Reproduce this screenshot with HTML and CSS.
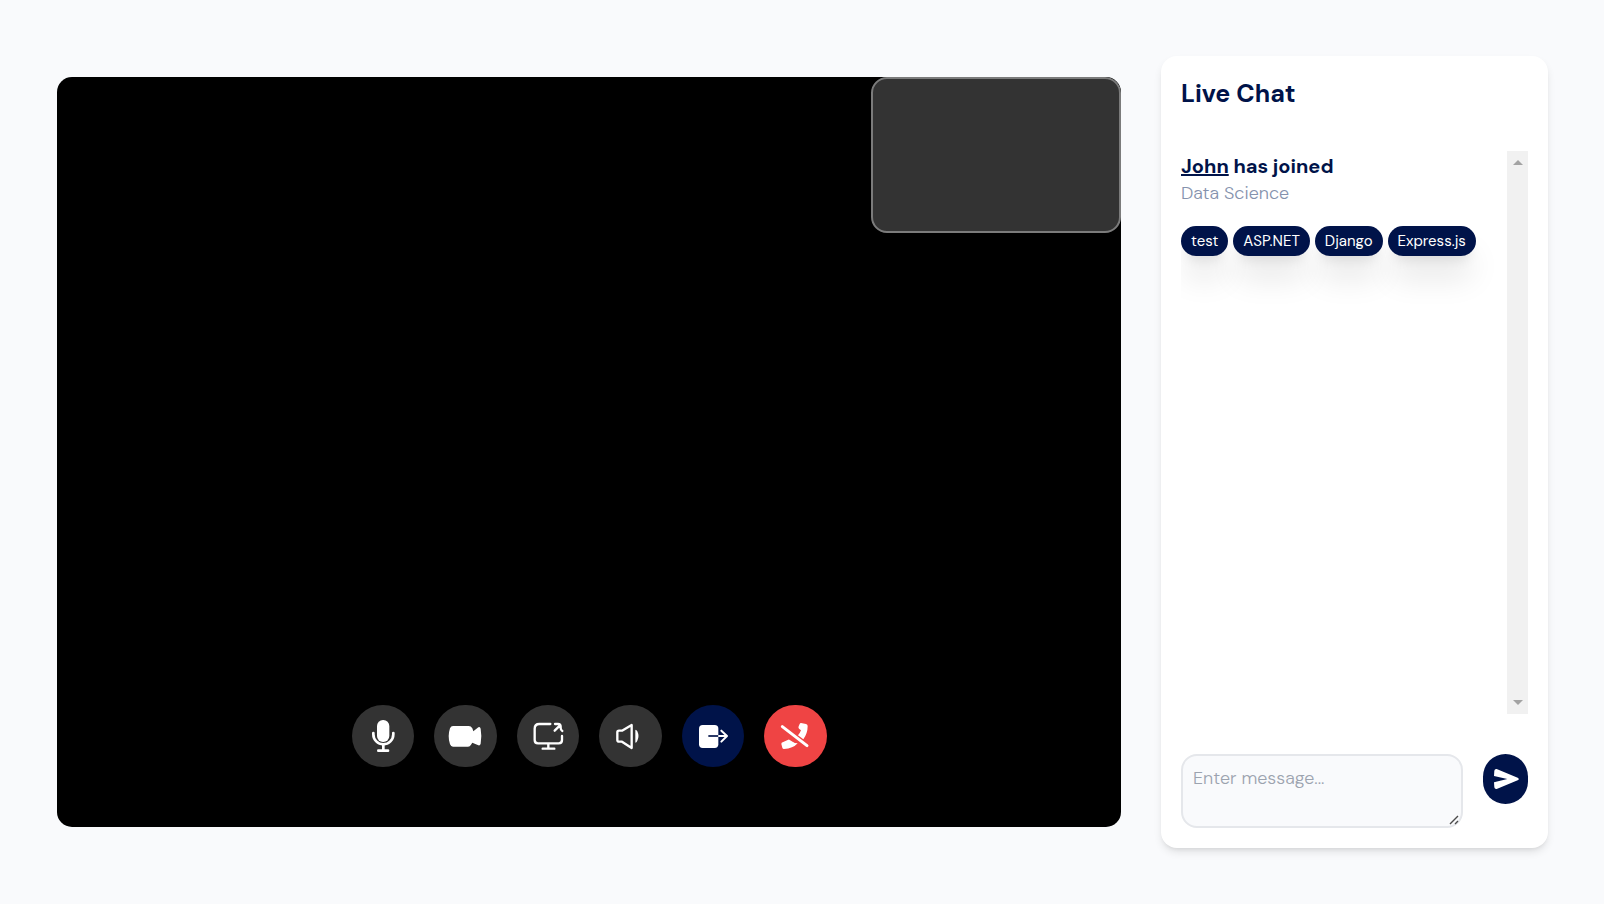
FILE: index.html
```html
<!DOCTYPE html>
<html lang="en">
<head>
  <meta charset="utf-8">
  <meta name="viewport" content="width=device-width, initial-scale=1">
  <title>Live Chat</title>
  <link rel="stylesheet" href="styles.css">
</head>
<body>
  <main class="room">
    <section class="stage" aria-label="Video call">
      <div class="self-view"></div>
      <div class="controls">
        <button class="control" type="button" aria-label="Microphone">
          <svg class="icon" viewBox="-54 -54 108 108"><rect class="solid" x="-18" y="-48" width="37" height="66" rx="18"/><path class="line w8" d="M-29-9v4a30 30 0 0 0 60 0v-4M1 28v14"/><path class="line w8" d="M-14 44h29"/></svg>
        </button>
        <button class="control" type="button" aria-label="Camera">
          <svg class="icon" viewBox="-54 -54 108 108"><path class="solid" d="M-36-30H11Q18-30 22-23L25-14L40-26Q45-29 47-22Q51 0 47 23Q45 30 40 28L22 20L18 26Q15 32 9 32H-36Q-42 32-45 25Q-53 1-45-23Q-42-30-36-30Z"/></svg>
        </button>
        <button class="control" type="button" aria-label="Share screen">
          <svg class="icon" viewBox="-54 -54 108 108"><path class="line w7" d="M7-36H-26Q-40-36-40-22V12Q-40 22-30 22H32Q42 22 42 12V0M1 22V37M-16 38H19M20-16L36-32M21-36H30Q38-36 38-28V-24Q38-18 43-15"/></svg>
        </button>
        <button class="control" type="button" aria-label="Volume">
          <svg class="icon" viewBox="-54 -54 108 108"><path class="line w7" d="M-33-16H-24L5-33V36L-24 17H-33Q-38 17-38 12V-11Q-38-16-33-16Z"/><path class="solid" d="M16-19Q20-19 22-14Q29 1 22 14Q20 20 16 20Z"/></svg>
        </button>
        <button class="control control-next" type="button" aria-label="Next">
          <svg class="icon" viewBox="-54 -54 108 108"><rect class="solid" x="-42" y="-33" width="58" height="69" rx="11"/><path class="line cut" d="M-14 0H16"/><path class="line w6" d="M18 0H41M25-16L42 0L25 17"/></svg>
        </button>
        <button class="control control-end" type="button" aria-label="End call">
          <svg class="icon" viewBox="-54 -54 108 108"><path class="solid" d="M18-39L33-36Q38-35 38-30Q38-8 25 10L9-2Q15-9 18-17L12-22Q9-25 11-29L14-36Q15-39 18-39ZM-17 11L-6 18Q-2 20-1 21L8 22Q-6 38-33 39Q-37 39-38 35L-41 24Q-41 20-37 19L-22 12Q-19 10-17 11Z"/><path class="line slash" d="M-38-28L36 29"/></svg>
        </button>
      </div>
    </section>

    <aside class="chat">
      <h1 class="chat-title">Live Chat</h1>
      <div class="log">
        <div class="messages">
          <h2 class="joined"><a class="user" href="#john">John</a> has joined</h2>
          <p class="field">Data Science</p>
          <ul class="tags">
            <li class="tag">test</li>
            <li class="tag">ASP.NET</li>
            <li class="tag">Django</li>
            <li class="tag">Express.js</li>
          </ul>
        </div>
        <div class="track" aria-hidden="true">
          <svg class="arrow" viewBox="0 0 10 5"><path d="M0 5L5 0L10 5Z"/></svg>
          <svg class="arrow" viewBox="0 0 10 5"><path d="M0 0L5 5L10 0Z"/></svg>
        </div>
      </div>
      <form class="composer">
        <div class="message-box">
          <textarea class="message" aria-label="Message" placeholder="Enter message..."></textarea>
          <svg class="grip" viewBox="0 0 10 10" aria-hidden="true"><path d="M1 9L9 1M6 9L9 6"/></svg>
        </div>
        <button class="send" type="button" aria-label="Send">
          <svg class="icon" viewBox="-54 -54 108 108"><path class="solid" d="M-28-30L35-4Q42 0 35 4L-28 30Q-34 31-35 25L-36 10L4 0L-36-9L-35-25Q-34-31-28-30Z"/></svg>
        </button>
      </form>
    </aside>
  </main>
</body>
</html>
```
FILE: styles.css
```css
* { box-sizing: border-box; }

body {
  margin: 0;
  background: #f9fafc;
  color: #001349;
  font-family: "DM Sans", Inter, sans-serif;
}

.room {
  display: flex;
  align-items: center;
  gap: 40px;
  min-height: 100vh;
  padding: 56px 56px 56px 57px;
}

.stage {
  position: relative;
  display: flex;
  flex: 1;
  align-items: flex-end;
  justify-content: center;
  min-height: 750px;
  padding-bottom: 60px;
  border-radius: 15px;
  background: #000;
  overflow: hidden;
}

.self-view {
  position: absolute;
  top: 0;
  right: 0;
  width: 250px;
  height: 156px;
  border: 2px solid #7b7b7b;
  border-radius: 16px;
  background: #333;
}

.controls {
  display: grid;
  grid-template-columns: repeat(6, 1fr);
  gap: 20px;
  width: 475px;
}

.control {
  display: grid;
  place-items: center;
  aspect-ratio: 1;
  padding: 0;
  border: 0;
  border-radius: 50%;
  background: #333;
}

.control-next { background: #001349; }
.control-end { background: #ef4444; }

.icon { display: block; width: 36px; height: 36px; }
.solid { fill: #fff; }
.line { fill: none; stroke: #fff; stroke-linecap: round; stroke-linejoin: round; }
.w6 { stroke-width: 6; }
.w7 { stroke-width: 7; }
.w8 { stroke-width: 8; }
.cut { stroke: #001349; stroke-width: 5; stroke-linecap: butt; }
.slash { stroke-width: 9; }

.chat {
  display: flex;
  flex: 0 0 387px;
  flex-direction: column;
  align-self: stretch;
  padding: 20px;
  border-radius: 16px;
  background: #fff;
  box-shadow: 0 5px 8px -1px rgb(0 0 0 / 10%), 0 3px 5px -3px rgb(0 0 0 / 10%);
}

.chat-title {
  margin: 0 0 40px;
  font-size: 25px;
  font-weight: 700;
  line-height: 35px;
}

.log {
  display: flex;
  flex: 1;
  margin-bottom: 40px;
}

.messages { flex: 1; overflow: hidden; }

.joined {
  margin: 0;
  font-size: 20px;
  font-weight: 700;
  line-height: 30px;
}

.user { color: inherit; }

.field {
  margin: 0 0 20px;
  color: #8592ad;
  font-size: 18px;
  font-weight: 300;
  line-height: 25px;
}

.tags {
  display: flex;
  flex-wrap: wrap;
  gap: 5px;
  margin: 0;
  padding: 0;
  list-style: none;
}

.tag {
  padding: 0 10px;
  border-radius: 15px;
  background: #001349;
  box-shadow: 0 25px 31px -3px rgb(0 0 0 / 10%), 0 10px 12px -6px rgb(0 0 0 / 10%);
  color: #fff;
  font-size: 15px;
  line-height: 30px;
}

.track {
  display: flex;
  flex-direction: column;
  align-items: center;
  justify-content: space-between;
  width: 21px;
  padding: 9px 0;
  background: #f1f1f1;
}

.arrow { width: 10px; height: 5px; fill: #a3a3a3; }

.composer {
  display: flex;
  align-items: flex-start;
  gap: 20px;
}

.message-box {
  position: relative;
  display: flex;
  flex: 1;
  min-width: 0;
}

.message {
  flex: 1;
  min-width: 0;
  height: 74px;
  padding: 10px;
  border: 2px solid #e5e7eb;
  border-radius: 16px;
  background: #f9fafc;
  color: #001349;
  font: 400 18px/25px "DM Sans", Inter, sans-serif;
}

.message::placeholder { color: #9ca3af; font-weight: 300; }
.message::-webkit-resizer { background: transparent; }

.grip {
  position: absolute;
  right: 4px;
  bottom: 3px;
  width: 10px;
  height: 10px;
  fill: none;
  stroke: #4b4b4b;
  stroke-width: 1.4;
  pointer-events: none;
}

.send {
  display: grid;
  place-items: center;
  width: 45px;
  height: 50px;
  padding: 0;
  border: 0;
  border-radius: 23px;
  background: #001349;
}
```
